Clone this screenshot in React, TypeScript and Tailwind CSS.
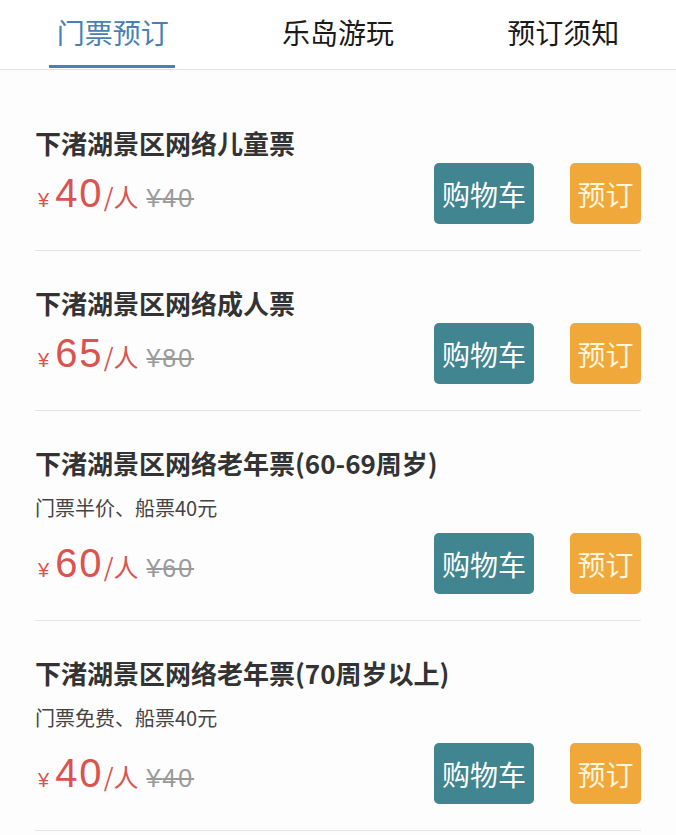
const font = { fontFamily: '"Noto Sans CJK SC", "Liberation Sans", sans-serif' };
const priceFont = { fontFamily: '"Liberation Sans", "Noto Sans CJK SC", sans-serif' };

type Ticket = {
  name: string;
  note?: string;
  price: number;
  origin: number;
};

const tickets: Ticket[] = [
  { name: "下渚湖景区网络儿童票", price: 40, origin: 40 },
  { name: "下渚湖景区网络成人票", price: 65, origin: 80 },
  { name: "下渚湖景区网络老年票(60-69周岁)", note: "门票半价、船票40元", price: 60, origin: 60 },
  { name: "下渚湖景区网络老年票(70周岁以上)", note: "门票免费、船票40元", price: 40, origin: 40 },
];

const tabs = ["门票预订", "乐岛游玩", "预订须知"];

function TicketRow({ t }: { t: Ticket }) {
  return (
    <div className="flex items-end justify-between border-b border-[#e4e4e4] pt-[37px] pb-[26px]">
      <div className="flex flex-col flex-1 min-w-0 mb-[9px]">
        <div className="text-[26px] leading-[30px] font-semibold text-[#333] whitespace-nowrap">{t.name}</div>
        {t.note && <div className="mt-[17px] text-[20px] leading-[26px] text-[#444] whitespace-nowrap">{t.note}</div>}
        <div className={`flex items-baseline h-[44px] ${t.note ? "mt-[20px]" : "mt-[13px]"}`} style={priceFont}>
          <span className="ml-[3px] text-[20px] text-[#d9534f] mr-[6px]">¥</span>
          <span className="text-[40px] leading-[44px] text-[#d9534f] tracking-[2px]">{t.price}</span>
          <span className="text-[25px] text-[#d9534f]" style={font}>/人</span>
          <span className="ml-[8px] text-[25px] text-[#9a9a9a] line-through tracking-[2px]">¥{t.origin}</span>
        </div>
      </div>
      <div className="flex shrink-0 items-center gap-[36px]">
        <button className="w-[100px] h-[61px] rounded-[5px] bg-[#40858f] text-white text-[28px]">购物车</button>
        <button className="w-[71px] h-[61px] rounded-[5px] bg-[#f1a83a] text-[#fff6dc] text-[28px]">预订</button>
      </div>
    </div>
  );
}

export default function App() {
  return (
    <div className="w-[676px] h-[835px] overflow-hidden bg-[#fdfdfd]" style={font}>
      <div className="grid grid-cols-3 h-[70px] border-b border-[#e2e2e2] bg-white">
        {tabs.map((tab, i) => (
          <div key={tab} className="relative flex items-center justify-center">
            <span className={`text-[28px] -mt-[6px] ${i === 0 ? "text-[#4a7fb6]" : "text-[#1a1a1a]"}`}>{tab}</span>
            {i === 0 && <div className="absolute bottom-[1px] left-[49px] w-[126px] h-[3px] bg-[#4a80bf]" />}
          </div>
        ))}
      </div>
      <div className="px-[35px] pt-[21px]">
        {tickets.map((t) => (
          <TicketRow key={t.name} t={t} />
        ))}
      </div>
    </div>
  );
}
